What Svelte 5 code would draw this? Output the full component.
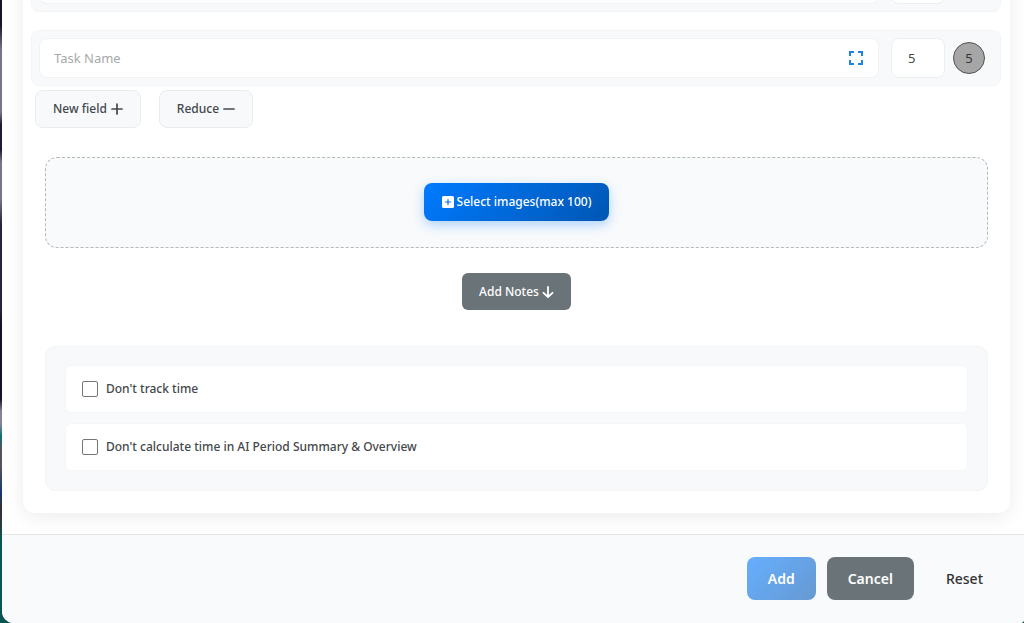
<script>
  let tasks = $state([
    { id: 1, name: '', hint: '', points: '', active: false },
    { id: 2, name: '', hint: 'Task Name', points: '5', active: true }
  ]);
  let noTrack = $state(false);
  let noSummary = $state(false);
</script>

<div class="backdrop">
  <div class="modal">
    <main class="scroll">
      <section class="card">
        {#each tasks as task (task.id)}
          <div class="row">
            <div class="field">
              <input class="name" type="text" placeholder={task.hint} aria-label="Task Name" bind:value={task.name} />
              {#if task.active}
                <button class="expand" type="button" aria-label="Expand">
                  <svg viewBox="0 0 14 14" width="14" height="14" fill="none" stroke="#1c84e0" stroke-width="2">
                    <path d="M1 5V1H5M9 1H13V5M13 9V13H9M5 13H1V9" />
                  </svg>
                </button>
              {/if}
            </div>
            <input class="points" type="text" inputmode="numeric" aria-label="Points" bind:value={task.points} />
            <span class="badge" class:blank={!task.active}>{task.points}</span>
          </div>
        {/each}

        <div class="fields">
          <button class="light" type="button">
            New field
            <svg viewBox="0 0 12 12" width="12" height="12" fill="none" stroke="currentColor" stroke-width="1.7" stroke-linecap="round"><path d="M6 1V11M1 6H11" /></svg>
          </button>
          <button class="light" type="button">
            Reduce
            <svg viewBox="0 0 12 12" width="12" height="12" fill="none" stroke="currentColor" stroke-width="1.7" stroke-linecap="round"><path d="M1 6H11" /></svg>
          </button>
        </div>

        <div class="drop">
          <button class="select" type="button">
            <svg viewBox="0 0 12 12" width="12" height="12"><rect width="12" height="12" rx="1.5" fill="#fff" /><path d="M6 3.5V8.5M3.5 6H8.5" stroke="#0871e6" stroke-width="1.2" stroke-linecap="round" /></svg>
            Select images(max 100)
          </button>
        </div>

        <button class="notes" type="button">
          Add Notes
          <svg viewBox="0 0 12 12" width="12" height="12" fill="none" stroke="currentColor" stroke-width="1.8" stroke-linecap="round" stroke-linejoin="round"><path d="M6 1V11M1.5 6.8L6 11L10.5 6.8" /></svg>
        </button>

        <div class="options">
          <label><input type="checkbox" bind:checked={noTrack} />Don't track time</label>
          <label><input type="checkbox" bind:checked={noSummary} />Don't calculate time in AI Period Summary &amp; Overview</label>
        </div>
      </section>
    </main>

    <footer>
      <button class="add" type="button">Add</button>
      <button class="cancel" type="button">Cancel</button>
      <button class="reset" type="button">Reset</button>
    </footer>
  </div>
</div>

<style>
  :global(body) {
    margin: 0;
  }
  .backdrop,
  .backdrop * {
    box-sizing: border-box;
  }
  .backdrop {
    height: 100vh;
    padding-left: 2px;
    background: linear-gradient(#17152b 0 4%, #77758a 8% 18%, #1d1936 20% 24%, #77758a 26% 32%, #25213f 36% 50%, #14122a 52% 64%, #85839b 66% 68%, #107080 70%, #55535c 72% 75%, #123a70 79%, #3a2c38 82%, #0a5552 87%);
    font-family: "Noto Sans", "Open Sans", sans-serif;
    font-size: 12px;
    font-weight: 500;
    line-height: 18px;
    color: #43484c;
  }
  .modal {
    display: flex;
    flex-direction: column;
    height: 100%;
    overflow: hidden;
    border-radius: 0 0 4px 12px;
    background: #fff;
  }
  .scroll {
    flex: 1;
    min-height: 0;
    display: flex;
    flex-direction: column;
    justify-content: flex-end;
    overflow: hidden;
    padding: 0 14px 21px 21px;
  }
  .card {
    flex: none;
    display: flex;
    flex-direction: column;
    padding: 8px 8px 22px;
    border-radius: 12px;
    background: #fff;
    box-shadow: 0 4px 20px rgba(0, 0, 0, 0.08);
  }
  button,
  input {
    font: inherit;
    color: inherit;
  }
  button {
    display: inline-flex;
    align-items: center;
    justify-content: center;
    gap: 3px;
    padding: 0;
    border: 0;
    border-radius: 6px;
    white-space: nowrap;
    cursor: pointer;
  }
  svg {
    flex: none;
  }
  .row {
    display: flex;
    align-items: center;
    margin-right: 1px;
    padding: 7px 15px 7px 7px;
    border: 1px solid #f2f4f5;
    border-radius: 8px;
    background: #f8f9fa;
  }
  .row + .row {
    margin-top: 18px;
  }
  .field {
    flex: 1;
    display: flex;
    align-items: center;
    margin-right: 12px;
    padding: 0 15px 0 14px;
    height: 40px;
    border: 1px solid #f0f2f4;
    border-radius: 8px;
    background: #fff;
  }
  .name {
    flex: 1;
    min-width: 0;
    padding: 0;
    border: 0;
    outline: 0;
    background: none;
    font-size: 13px;
    font-weight: 400;
  }
  .name::placeholder {
    color: #a9a9a9;
    opacity: 1;
  }
  .expand {
    background: none;
  }
  .points {
    width: 54px;
    height: 40px;
    margin-right: 8px;
    padding: 0 16px;
    border: 1px solid #eceff1;
    border-radius: 8px;
    background: #fff;
    font-size: 13px;
    font-weight: 400;
  }
  .badge {
    display: flex;
    align-items: center;
    justify-content: center;
    width: 32px;
    height: 32px;
    border: 1px solid #555;
    border-radius: 50%;
    background: #a6a6a6;
    color: #333;
    font-size: 13px;
    font-weight: 400;
  }
  .blank {
    visibility: hidden;
  }
  .fields {
    display: flex;
    gap: 18px;
    padding: 4px 4px 0;
  }
  .light {
    gap: 4px;
    padding: 9px 17px;
    border: 1px solid #e9ecef;
    border-radius: 8px;
    background: #f8f9fa;
  }
  .drop {
    display: flex;
    justify-content: center;
    margin: 29px 14px 0;
    padding: 25px 25px 26px;
    border: 1px dashed #b4b9bb;
    border-radius: 12px;
    background: #f8fafc;
  }
  .select {
    padding: 10px 18px;
    border-radius: 8px;
    background: linear-gradient(135deg, #007bff, #0056b3);
    color: #fff;
    box-shadow: 0 4px 12px rgba(0, 123, 255, 0.3);
  }
  .notes {
    align-self: center;
    margin-top: 25px;
    padding: 9px 17px;
    line-height: 19px;
    background: #6a7478;
    color: #fff;
  }
  .options {
    display: flex;
    flex-direction: column;
    gap: 10px;
    margin: 36px 14px 0;
    padding: 18px 19px 19px;
    border: 1px solid #f2f4f5;
    border-radius: 10px;
    background: #f8f9fa;
  }
  label {
    display: flex;
    align-items: center;
    gap: 8px;
    height: 48px;
    padding: 0 16px;
    border: 1px solid #f5f6f8;
    border-radius: 6px;
    background: #fff;
  }
  label input {
    appearance: none;
    width: 16px;
    height: 16px;
    margin: 0;
    border: 1px solid #767676;
    border-radius: 2px;
    background: #fff;
  }
  label input:checked {
    background: #007bff;
  }
  footer {
    display: flex;
    justify-content: flex-end;
    gap: 11px;
    padding: 22px 20px 23px;
    border-top: 1px solid #e3e6e9;
    background: #f8fafb;
    font-size: 14px;
    line-height: 19px;
  }
  footer button {
    padding: 12px 21px;
    border-radius: 8px;
  }
  .add,
  .cancel {
    font-weight: 600;
    color: #fff;
  }
  .add {
    background: linear-gradient(135deg, #66aeff, #6699d1);
  }
  .cancel {
    background: #6a7478;
  }
  .reset {
    background: none;
    color: #333;
  }
</style>
